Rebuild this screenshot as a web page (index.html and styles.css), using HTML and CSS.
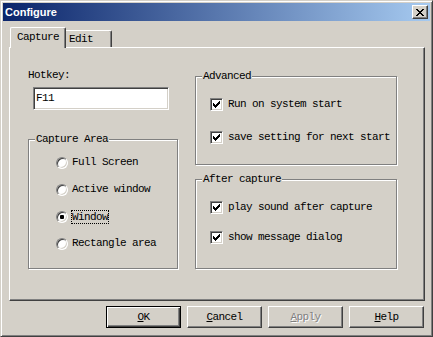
FILE: index.html
```html
<!DOCTYPE html>
<html lang="en">

<head>
  <meta charset="UTF-8">
  <meta name="viewport" content="width=device-width, initial-scale=1.0">
  <title>Configure</title>
  <link rel="stylesheet" href="styles.css">
</head>

<body>
  <div class="window">
    <div class="titlebar">
      <span class="titlebar__text">Configure</span>
      <span class="titlebar__close">
        <svg width="8" height="7" viewBox="0 0 8 7" shape-rendering="crispEdges">
          <path fill="#000" d="M0 0h2v1H0z M6 0h2v1H6z M1 1h2v1H1z M5 1h2v1H5z M2 2h4v1H2z M3 3h2v1H3z M2 4h4v1H2z M1 5h2v1H1z M5 5h2v1H5z M0 6h2v1H0z M6 6h2v1H6z" />
        </svg>
      </span>
    </div>

    <div class="tabs">
      <div class="tab tab--active">Capture</div>
      <div class="tab tab--edit">Edit</div>
    </div>

    <div class="panel">
      <div class="col col--left">
        <div class="label">Hotkey:</div>
        <div class="input">F11</div>

        <div class="group group--area">
          <span class="group__title">Capture Area</span>
          <div class="option"><span class="radio"></span><span>Full Screen</span></div>
          <div class="option"><span class="radio"></span><span>Active window</span></div>
          <div class="option"><span class="radio radio--on"><span class="radio__dot"></span></span><span class="focus">Window</span></div>
          <div class="option"><span class="radio"></span><span>Rectangle area</span></div>
        </div>
      </div>

      <div class="col col--right">
        <div class="group group--advanced">
          <span class="group__title">Advanced</span>
          <div class="option option--check">
            <span class="check">
              <svg width="7" height="7" viewBox="0 0 7 7" shape-rendering="crispEdges">
                <path fill="#000" d="M6 0h1v1H6z M5 1h2v1H5z M0 2h1v1H0z M4 2h3v1H4z M0 3h2v1H0z M3 3h3v1H3z M0 4h5v1H0z M1 5h3v1H1z M2 6h1v1H2z" />
              </svg>
            </span>
            <span>Run on system start</span>
          </div>
          <div class="option option--check">
            <span class="check">
              <svg width="7" height="7" viewBox="0 0 7 7" shape-rendering="crispEdges">
                <path fill="#000" d="M6 0h1v1H6z M5 1h2v1H5z M0 2h1v1H0z M4 2h3v1H4z M0 3h2v1H0z M3 3h3v1H3z M0 4h5v1H0z M1 5h3v1H1z M2 6h1v1H2z" />
              </svg>
            </span>
            <span>save setting for next start</span>
          </div>
        </div>

        <div class="group group--after">
          <span class="group__title">After capture</span>
          <div class="option option--check">
            <span class="check">
              <svg width="7" height="7" viewBox="0 0 7 7" shape-rendering="crispEdges">
                <path fill="#000" d="M6 0h1v1H6z M5 1h2v1H5z M0 2h1v1H0z M4 2h3v1H4z M0 3h2v1H0z M3 3h3v1H3z M0 4h5v1H0z M1 5h3v1H1z M2 6h1v1H2z" />
              </svg>
            </span>
            <span>play sound after capture</span>
          </div>
          <div class="option option--check">
            <span class="check">
              <svg width="7" height="7" viewBox="0 0 7 7" shape-rendering="crispEdges">
                <path fill="#000" d="M6 0h1v1H6z M5 1h2v1H5z M0 2h1v1H0z M4 2h3v1H4z M0 3h2v1H0z M3 3h3v1H3z M0 4h5v1H0z M1 5h3v1H1z M2 6h1v1H2z" />
              </svg>
            </span>
            <span>show message dialog</span>
          </div>
        </div>
      </div>
    </div>

    <div class="buttons">
      <div class="button button--default"><u>O</u>K</div>
      <div class="button"><u>C</u>ancel</div>
      <div class="button button--disabled"><u>A</u>pply</div>
      <div class="button"><u>H</u>elp</div>
    </div>
  </div>
</body>

</html>
```

FILE: styles.css
```css
body {
  margin: 0;
  background-color: #d4d0c8;
  font-family: 'Liberation Mono', monospace;
  font-size: 11px;
  letter-spacing: -0.6px;
  color: #000;
}

.window {
  width: 433px;
  height: 337px;
  box-sizing: border-box;
  padding: 2px;
  background-color: #d4d0c8;
  border: 1px solid;
  border-color: #d4d0c8 #404040 #404040 #d4d0c8;
  box-shadow: inset 1px 1px 0 #fff, inset -1px -1px 0 #808080;
}

.titlebar {
  height: 18px;
  display: flex;
  align-items: center;
  justify-content: space-between;
  padding: 0 2px;
  background: linear-gradient(to right, #0a246a, #a6caf0);
}

.titlebar__text {
  font-family: 'Liberation Sans', sans-serif;
  font-weight: bold;
  font-size: 11px;
  letter-spacing: 0;
  color: #fff;
}

.titlebar__close {
  width: 16px;
  height: 14px;
  box-sizing: border-box;
  display: flex;
  align-items: center;
  justify-content: center;
  background-color: #d4d0c8;
  border: 1px solid;
  border-color: #fff #404040 #404040 #fff;
  box-shadow: inset -1px -1px 0 #808080;
}

.tabs {
  display: flex;
  align-items: flex-end;
  height: 20px;
  margin: 6px 0 0 7px;
}

.tab {
  background-color: #d4d0c8;
  border-top: 1px solid #fff;
  border-left: 1px solid #fff;
  border-right: 1px solid #404040;
  box-shadow: inset -1px 0 0 #808080;
  border-radius: 2px 2px 0 0;
}

.tab--active {
  position: relative;
  z-index: 2;
  height: 20px;
  line-height: 18px;
  padding: 0 6px;
  margin-bottom: -1px;
}

.tab--edit {
  height: 16px;
  line-height: 16px;
  margin-left: -2px;
  padding: 0 18px 0 4px;
}

.panel {
  width: 416px;
  height: 254px;
  box-sizing: border-box;
  margin-left: 6px;
  padding-left: 18px;
  border-top: 1px solid #fff;
  border-left: 1px solid #fff;
  border-right: 1px solid #404040;
  border-bottom: 1px solid #404040;
  box-shadow: inset -1px -1px 0 #808080;
  display: grid;
  grid-template-columns: 150px 202px;
  column-gap: 17px;
  align-items: start;
}

.label {
  margin-top: 21px;
  line-height: 12px;
}

.input {
  width: 136px;
  height: 23px;
  box-sizing: border-box;
  margin: 6px 0 0 5px;
  padding-left: 2px;
  line-height: 21px;
  background-color: #fff;
  border: 1px solid;
  border-color: #808080 #fff #fff #808080;
  box-shadow: inset 1px 1px 0 #404040, inset -1px -1px 0 #d4d0c8;
}

.col--right {
  padding-top: 28px;
}

.group {
  position: relative;
  box-sizing: border-box;
  border: 1px solid #808080;
  box-shadow: 1px 1px 0 #fff, inset 1px 1px 0 #fff;
  display: flex;
  flex-direction: column;
}

.group__title {
  position: absolute;
  top: -7px;
  left: 6px;
  padding: 0 1px;
  line-height: 12px;
  background-color: #d4d0c8;
}

.group--area {
  margin-top: 29px;
  height: 130px;
  padding: 16px 0 0 27px;
  gap: 14px;
}

.group--advanced {
  height: 89px;
  padding: 21px 0 0 14px;
  gap: 20px;
}

.group--after {
  margin-top: 14px;
  height: 90px;
  padding: 21px 0 0 14px;
  gap: 17px;
}

.option {
  display: flex;
  align-items: center;
  gap: 4px;
  height: 13px;
  line-height: 13px;
  white-space: nowrap;
}

.option--check {
  gap: 5px;
}

.radio {
  width: 12px;
  height: 12px;
  box-sizing: border-box;
  border-radius: 50%;
  background-color: #fff;
  border: 1px solid;
  border-color: #808080 #fff #fff #808080;
  box-shadow: inset 1px 1px 0 #404040, inset -1px -1px 0 #d4d0c8;
  display: flex;
  align-items: center;
  justify-content: center;
}

.radio__dot {
  width: 4px;
  height: 4px;
  border-radius: 1px;
  background-color: #000;
}

.focus {
  display: inline-block;
  line-height: 12px;
  outline: 1px dotted #000;
}

.check {
  width: 13px;
  height: 13px;
  box-sizing: border-box;
  flex: none;
  background-color: #fff;
  border: 1px solid;
  border-color: #808080 #fff #fff #808080;
  box-shadow: inset 1px 1px 0 #404040, inset -1px -1px 0 #d4d0c8;
  display: flex;
  align-items: center;
  justify-content: center;
}

.buttons {
  display: flex;
  justify-content: flex-end;
  gap: 6px;
  margin-top: 5px;
  padding-right: 6px;
}

.button {
  width: 75px;
  height: 22px;
  box-sizing: border-box;
  text-align: center;
  line-height: 20px;
  border: 1px solid;
  border-color: #fff #404040 #404040 #fff;
  box-shadow: inset -1px -1px 0 #808080;
}

.button--default {
  border-color: #000;
  box-shadow: inset 1px 1px 0 #fff, inset -1px -1px 0 #404040, inset -2px -2px 0 #808080;
}

.button--disabled {
  color: #808080;
  text-shadow: 1px 1px 0 #fff;
}
```
